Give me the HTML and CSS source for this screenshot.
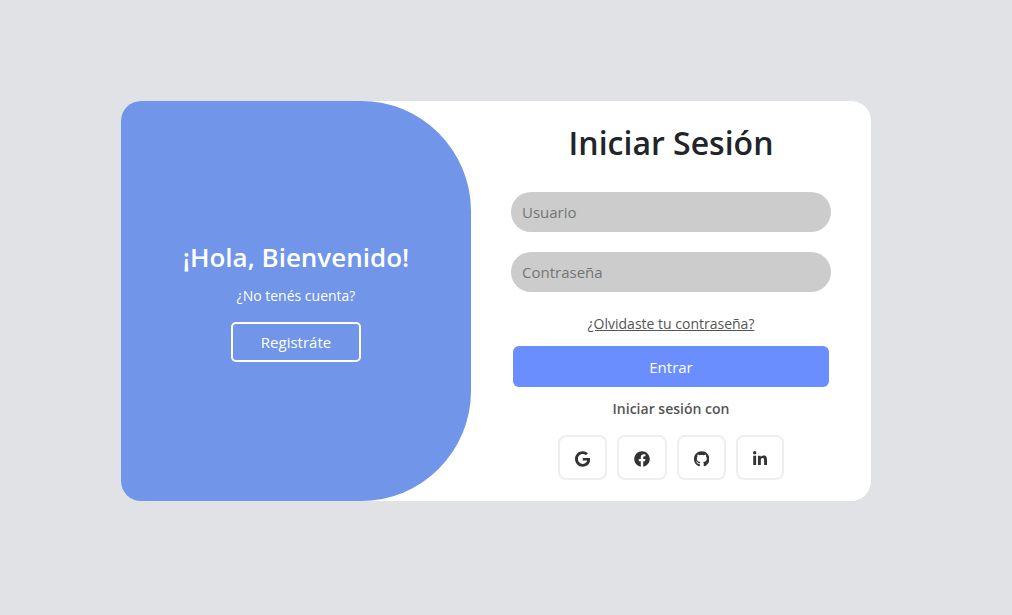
FILE: index.html
```html
<!DOCTYPE html>
<html lang="es">
<head>
<meta charset="utf-8">
<meta name="viewport" content="width=device-width, initial-scale=1">
<title>Iniciar Sesión</title>
<link rel="stylesheet" href="styles.css">
</head>
<body>
<main class="card">
  <section class="welcome">
    <h2 class="welcome-title">¡Hola, Bienvenido!</h2>
    <p class="welcome-text">¿No tenés cuenta?</p>
    <button class="register" type="button">Registráte</button>
  </section>
  <form class="login">
    <h1 class="login-title">Iniciar Sesión</h1>
    <input class="field" type="text" placeholder="Usuario" aria-label="Usuario">
    <input class="field" type="password" placeholder="Contraseña" aria-label="Contraseña">
    <a class="forgot" href="#">¿Olvidaste tu contraseña?</a>
    <button class="submit" type="submit">Entrar</button>
    <p class="social-label">Iniciar sesión con</p>
    <nav class="social">
      <a class="social-link" href="#" aria-label="Google"><svg class="icon" viewBox="0 0 488 512"><path d="M488 261.8C488 403.3 391.1 504 248 504 110.8 504 0 393.2 0 256S110.8 8 248 8c66.8 0 123 24.5 166.3 64.9l-67.5 64.9C258.5 52.6 94.3 116.6 94.3 256c0 86.5 69.1 156.6 153.7 156.6 98.2 0 135-70.4 140.8-106.9H248v-85.3h236.1c2.3 12.7 3.9 24.9 3.9 41.4z"/></svg></a>
      <a class="social-link" href="#" aria-label="Facebook"><svg class="icon" viewBox="0 0 512 512"><path d="M504 256C504 119 393 8 256 8S8 119 8 256c0 123.78 90.69 226.38 209.25 245V327.69h-63V256h63v-54.64c0-62.15 37-96.48 93.67-96.48 27.14 0 55.52 4.84 55.52 4.84v61h-31.28c-30.8 0-40.41 19.12-40.41 38.73V256h68.78l-11 71.69h-57.78V501C413.31 482.38 504 379.78 504 256z"/></svg></a>
      <a class="social-link" href="#" aria-label="GitHub"><svg class="icon" viewBox="0 0 496 512"><path d="M165.9 397.4c0 2-2.3 3.6-5.2 3.6-3.3.3-5.6-1.3-5.6-3.6 0-2 2.3-3.6 5.2-3.6 3-.3 5.6 1.3 5.6 3.6zm-31.1-4.5c-.7 2 1.3 4.3 4.3 4.9 2.6 1 5.6 0 6.2-2s-1.3-4.3-4.3-5.2c-2.6-.7-5.5.3-6.2 2.3zm44.2-1.7c-2.9.7-4.9 2.6-4.6 4.9.3 2 2.9 3.3 5.9 2.6 2.9-.7 4.9-2.6 4.6-4.6-.3-1.9-3-3.2-5.9-2.9zM244.8 8C106.1 8 0 113.3 0 252c0 110.9 69.8 205.8 169.5 239.2 12.8 2.3 17.3-5.6 17.3-12.1 0-6.2-.3-40.4-.3-61.4 0 0-70 15-84.7-29.8 0 0-11.4-29.1-27.8-36.6 0 0-22.9-15.7 1.6-15.4 0 0 24.9 2 38.6 25.8 21.9 38.6 58.6 27.5 72.9 20.9 2.3-16 8.8-27.1 16-33.7-55.9-6.2-112.3-14.3-112.3-110.5 0-27.5 7.6-41.3 23.6-58.9-2.6-6.5-11.1-33.3 2.6-67.9 20.9-6.5 69 27 69 27 20-5.6 41.5-8.5 62.8-8.5s42.8 2.9 62.8 8.5c0 0 48.1-33.6 69-27 13.7 34.7 5.2 61.4 2.6 67.9 16 17.7 25.8 31.5 25.8 58.9 0 96.5-58.9 104.2-114.8 110.5 9.2 7.9 17 22.9 17 46.4 0 33.7-.3 75.4-.3 83.6 0 6.5 4.6 14.4 17.3 12.1C428.2 457.8 496 362.9 496 252 496 113.3 383.5 8 244.8 8z"/></svg></a>
      <a class="social-link" href="#" aria-label="LinkedIn"><svg class="icon" viewBox="0 0 448 512"><path d="M100.28 448H7.4V148.9h92.88zM53.79 108.1C24.09 108.1 0 83.5 0 53.8a53.79 53.79 0 0 1 107.58 0c0 29.7-24.1 54.3-53.79 54.3zM447.9 448h-92.68V302.4c0-34.7-.7-79.2-48.29-79.2-48.29 0-55.69 37.7-55.69 76.7V448h-92.78V148.9h89.08v40.8h1.3c12.4-23.5 42.69-48.3 87.88-48.3 94 0 111.28 61.9 111.28 142.3V448z"/></svg></a>
    </nav>
  </form>
</main>
</body>
</html>
```
FILE: styles.css
```css
* { box-sizing: border-box; }

body {
  display: flex;
  align-items: center;
  justify-content: center;
  min-height: 100vh;
  margin: 0;
  padding: 0 20px 13px 0;
  background: #e1e2e6;
  color: #212529;
  font-family: "Segoe UI", "Open Sans", "Noto Sans", sans-serif;
  font-size: 15px;
  line-height: 24px;
}

h1, h2, p { margin: 0; }

button, input { font: inherit; }

.card {
  display: grid;
  grid-template-columns: 7fr 8fr;
  width: 100%;
  max-width: 750px;
  min-height: 400px;
  border-radius: 20px;
  background: #fff;
  overflow: hidden;
}

.welcome {
  display: flex;
  flex-direction: column;
  align-items: center;
  justify-content: center;
  border-radius: 0 110px 110px 0;
  background: #7095e9;
  color: #fff;
}

.welcome-title {
  margin-bottom: 10px;
  font-size: 26px;
  font-weight: 600;
  line-height: 34px;
}

.welcome-text {
  margin-bottom: 14px;
  font-size: 14px;
}

.register {
  width: 130px;
  height: 40px;
  padding: 0;
  border: 2px solid #fff;
  border-radius: 5px;
  background: transparent;
  color: #fff;
}

.login {
  display: flex;
  flex-direction: column;
  align-items: center;
  padding: 20px 40px;
}

.login-title {
  margin-bottom: 27px;
  font-size: 32px;
  font-weight: 600;
  line-height: 44px;
}

.field {
  width: 100%;
  height: 40px;
  margin-bottom: 20px;
  padding: 0 11px;
  border: 0;
  border-radius: 20px;
  background: #ccc;
  color: #212529;
}

.field::placeholder { color: #757575; opacity: 1; }

.forgot {
  margin-bottom: 10px;
  color: #555;
  font-size: 14px;
}

.submit {
  align-self: stretch;
  height: 41px;
  margin: 0 2px 10px;
  padding: 0;
  border: 0;
  border-radius: 6px;
  background: #6b8eff;
  color: #fff;
}

.social-label {
  margin-bottom: 14px;
  color: #555;
  font-size: 14px;
  font-weight: 600;
}

.social {
  display: flex;
  gap: 10px;
}

.social-link {
  display: flex;
  align-items: center;
  height: 45px;
  padding: 2px 15px 0;
  border: 2px solid #eee;
  border-radius: 8px;
  color: #333;
}

.icon {
  height: 16px;
  fill: currentColor;
}
```
